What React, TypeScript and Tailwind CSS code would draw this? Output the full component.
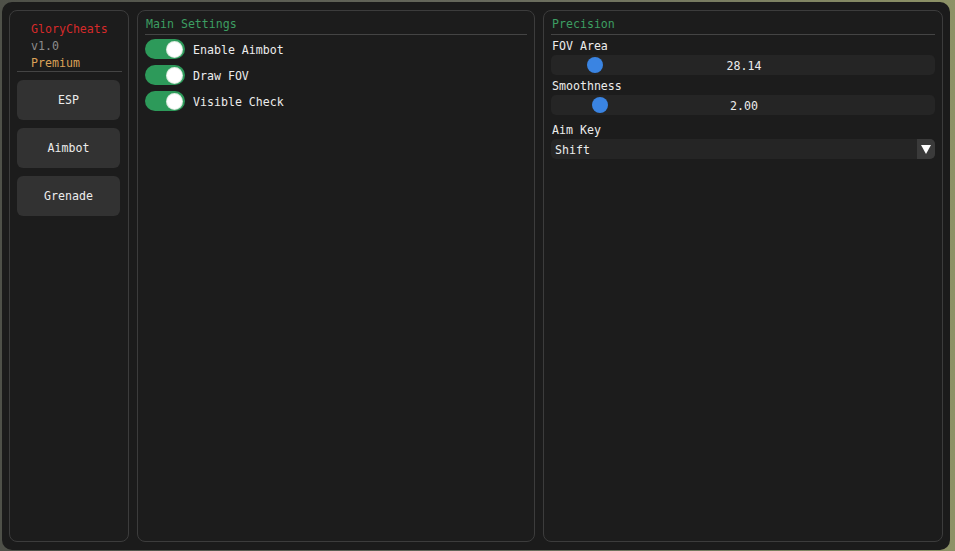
import { useState } from 'react';

const font = "font-['DejaVu_Sans_Mono',monospace] text-[11.6px] leading-[17px]";

function Toggle({ label }: { label: string }) {
  const [on, setOn] = useState(true);
  return (
    <div className="flex items-center gap-2 h-5 cursor-pointer" onClick={() => setOn(!on)}>
      <div className={`w-10 h-5 rounded-full flex items-center ${on ? 'bg-[#2d9a5a] justify-end' : 'bg-[#3a3a3a] justify-start'}`}>
        <div className="w-[15px] h-[15px] mx-[3px] rounded-full bg-white ring-1 ring-[#d8e8dc]" />
      </div>
      <span className="text-[#ececec] translate-y-[1px]">{label}</span>
    </div>
  );
}

function Slider({ value, offset }: { value: string; offset: number }) {
  return (
    <div className="relative h-5 rounded-[5px] bg-[#252525] flex items-center justify-center">
      <div
        className="absolute top-[2px] w-[16px] h-[16px] rounded-full bg-[#3a84e2]"
        style={{ left: offset - 8 }}
      />
      <span className="text-[#ececec] pl-[2px] translate-y-[1px]">{value}</span>
    </div>
  );
}

function Panel({ title, children }: { title: string; children: React.ReactNode }) {
  return (
    <div className="flex-1 min-w-0 flex flex-col px-[7px] pt-[5px] rounded-[8px] border border-[#3c3c3c] bg-[#1c1c1c]">
      <div className="text-[#3c9e62] pl-[1px]">{title}</div>
      <div className="h-px mt-[1px] bg-[#444]" />
      {children}
    </div>
  );
}

export default function App() {
  return (
    <div className="w-[955px] h-[551px] overflow-hidden bg-gradient-to-r from-[#4e5048] via-[#66685c] to-[#8d9266] pt-[2px] pl-[2px]">
      <div className={`w-[948px] h-[548px] rounded-[10px] bg-[#1b1b1b] flex gap-2 px-[7px] pt-[8px] pb-[8px] ${font}`}>
        <div className="w-[120px] shrink-0 flex flex-col rounded-[8px] border border-[#3c3c3c] bg-[#1c1c1c] px-[7px] pt-[10px]">
          <div className="pl-[14px]">
            <div className="text-[#d62a2a]">GloryCheats</div>
            <div className="text-[#8c8c8c]">v1.0</div>
            <div className="text-[#dba257]">Premium</div>
          </div>
          <div className="h-px -mt-px mr-[-1px] bg-[#444]" />
          <div className="flex flex-col gap-2 mt-[8px]">
            {['ESP', 'Aimbot', 'Grenade'].map((b) => (
              <button key={b} className="h-10 w-[103px] rounded-[6px] bg-[#323232] text-[#ececec] hover:bg-[#3a3a3a]">
                {b}
              </button>
            ))}
          </div>
        </div>

        <div className="w-[398px] shrink-0 flex">
          <Panel title="Main Settings">
            <div className="flex flex-col gap-[6px] mt-[4px]">
              <Toggle label="Enable Aimbot" />
              <Toggle label="Draw FOV" />
              <Toggle label="Visible Check" />
            </div>
          </Panel>
        </div>

        <Panel title="Precision">
          <div className="text-[#ececec] mt-[2px] pl-[1px] translate-y-[1px]">FOV Area</div>
          <div className="mt-[1px]">
            <Slider value="28.14" offset={44} />
          </div>
          <div className="text-[#ececec] mt-[2px] pl-[1px] translate-y-[1px]">Smoothness</div>
          <div className="mt-[1px]">
            <Slider value="2.00" offset={49} />
          </div>
          <div className="text-[#ececec] mt-[6px] pl-[1px] translate-y-[1px]">Aim Key</div>
          <div className="mt-[1px] h-5 rounded-[5px] bg-[#252525] flex items-center overflow-hidden">
            <span className="flex-1 pl-[4px] text-[#ececec] translate-y-[1px]">Shift</span>
            <div className="w-[18px] h-full bg-[#3a3a3a] flex items-center justify-center">
              <svg width="10" height="9" viewBox="0 0 10 9">
                <path d="M0 0 H10 L5 9 Z" fill="#ffffff" />
              </svg>
            </div>
          </div>
        </Panel>
      </div>
    </div>
  );
}
